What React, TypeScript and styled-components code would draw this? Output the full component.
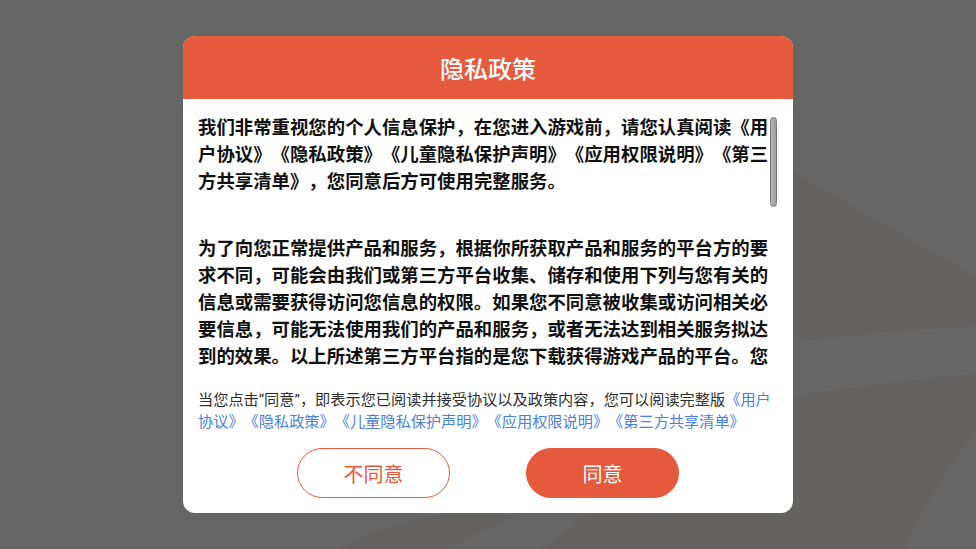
import React from 'react'
import styled, { createGlobalStyle } from 'styled-components'

const GlobalStyle = createGlobalStyle`
  html, body {
    margin: 0;
    padding: 0;
    background: #666666;
  }
  * {
    box-sizing: border-box;
  }
`

const FONT = `Roboto, "Noto Sans CJK SC", sans-serif`

const StyledPage = styled.div`
  position: relative;
  width: 100vw;
  height: 100vh;
  overflow: hidden;
  display: flex;
  justify-content: center;
  align-items: flex-start;
  padding-top: 36px;
  background: #666666;
  font-family: ${FONT};
  text-spacing-trim: space-all;
`
const StyledBackdrop = styled.svg`
  position: absolute;
  left: 0;
  top: 0;
  width: 100%;
  height: 100%;
`
const StyledDialog = styled.div`
  position: relative;
  width: 610px;
  height: 477px;
  border-radius: 12px;
  background: #fff;
  overflow: hidden;
  display: flex;
  flex-direction: column;
`
const StyledHeader = styled.div`
  height: 63px;
  flex: none;
  display: flex;
  align-items: center;
  justify-content: center;
  background: #e5593d;
  color: #fff;
  font-size: 24px;
  font-weight: 500;
`
const StyledScrollFrame = styled.div`
  position: relative;
  margin: 15px 0 0 15px;
  width: 579px;
  height: 258px;
  padding-right: 7px;
  flex: none;
`
const StyledContent = styled.div`
  height: 100%;
  overflow: hidden;
  color: #111;
  font-size: 18.4px;
  line-height: 27px;
  font-weight: 600;
`
const StyledParagraph = styled.p<{ $gap?: number }>`
  margin: ${p => p.$gap || 0}px 0 0;
`
const StyledThumb = styled.div`
  position: absolute;
  right: 0;
  top: 3px;
  width: 7px;
  height: 90px;
  border-radius: 4px;
  border: 1px solid #7a7a7a;
  background: linear-gradient(90deg, #b5b5b5, #9d9d9d);
`
const StyledNotice = styled.div`
  margin: 17px 0 0 15px;
  width: 576px;
  font-size: 15.2px;
  line-height: 22px;
  color: #2e2e2e;
`
const StyledLink = styled.span`
  color: #4a80e0;
`
const StyledActions = styled.div`
  margin-top: 15px;
  display: flex;
  justify-content: center;
  gap: 76px;
`
const StyledButton = styled.button<{ $primary?: boolean }>`
  width: 153px;
  height: 50px;
  border-radius: 25px;
  border: 1px solid #e5593d;
  background: ${p => (p.$primary ? '#e5593d' : '#fff')};
  color: ${p => (p.$primary ? '#fff' : '#e5593d')};
  font-family: ${FONT};
  font-size: 20px;
  cursor: pointer;
  padding: 0;
`

const DOCS = ['《用户协议》', '《隐私政策》', '《儿童隐私保护声明》', '《应用权限说明》', '《第三方共享清单》']

class PrivacyDialog extends React.Component {
  render() {
    return (
      <StyledDialog>
        <StyledHeader>隐私政策</StyledHeader>
        <StyledScrollFrame>
          <StyledContent>
            <StyledParagraph>
              我们非常重视您的个人信息保护，在您进入游戏前，请您认真阅读{DOCS.join('')}，您同意后方可使用完整服务。
            </StyledParagraph>
            <StyledParagraph $gap={40}>
              为了向您正常提供产品和服务，根据你所获取产品和服务的平台方的要求不同，可能会由我们或第三方平台收集、储存和使用下列与您有关的信息或需要获得访问您信息的权限。如果您不同意被收集或访问相关必要信息，可能无法使用我们的产品和服务，或者无法达到相关服务拟达到的效果。以上所述第三方平台指的是您下载获得游戏产品的平台。您可以在设置中随时查看和管理相关权限。
            </StyledParagraph>
          </StyledContent>
          <StyledThumb />
        </StyledScrollFrame>
        <StyledNotice>
          当您点击“同意”，即表示您已阅读并接受协议以及政策内容，您可以阅读完整版
          {DOCS.map(doc => (
            <StyledLink key={doc}>{doc}</StyledLink>
          ))}
        </StyledNotice>
        <StyledActions>
          <StyledButton>不同意</StyledButton>
          <StyledButton $primary>同意</StyledButton>
        </StyledActions>
      </StyledDialog>
    )
  }
}

export default function App() {
  return (
    <StyledPage>
      <GlobalStyle />
      <StyledBackdrop viewBox="0 0 976 549" preserveAspectRatio="none">
        <path d="M760,153 L976,277 L976,326 Q880,330 770,346 Z" fill="#646161" />
        <path d="M770,400 Q880,382 976,374 L976,432 Q935,480 905,549 L540,549 Q585,520 600,500 Z" fill="#646161" />
        <path d="M340,549 Q380,525 440,515 L520,515 Q470,535 450,549 Z" fill="#646161" />
      </StyledBackdrop>
      <PrivacyDialog />
    </StyledPage>
  )
}
